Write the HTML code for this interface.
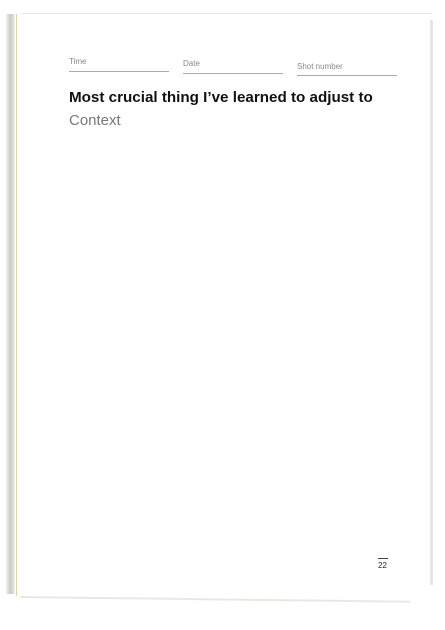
<!DOCTYPE html>
<html><head><style>
body{margin:0;width:445px;height:630px;background:#fff;position:relative;overflow:hidden;font-family:"Liberation Sans",sans-serif}
.a{position:absolute}
.lbl{font-size:8px;color:#888}
.ln{height:1px;background:#aaa}
</style></head><body>
<div class="a" style="left:6px;top:14px;width:9px;height:580px;background:linear-gradient(90deg,#f2f2ee,#c8cac4,#eeeee8)"></div>
<div class="a" style="left:16px;top:14px;width:1px;height:582px;background:#d8d4a8"></div>
<div class="a" style="left:22px;top:13px;width:410px;height:1px;background:#e4e4e0"></div>
<div class="a" style="left:430px;top:20px;width:3px;height:565px;background:#e6e6e2"></div>
<div class="a" style="left:20px;top:596px;width:390px;height:2px;background:#e8e8e2;transform:rotate(0.7deg);transform-origin:left"></div>
<div class="a lbl" style="left:69px;top:57px">Time</div>
<div class="a ln" style="left:69px;top:71px;width:100px"></div>
<div class="a lbl" style="left:183px;top:59px">Date</div>
<div class="a ln" style="left:183px;top:73px;width:100px"></div>
<div class="a lbl" style="left:297px;top:62px">Shot number</div>
<div class="a ln" style="left:297px;top:75px;width:100px"></div>
<div class="a" style="left:69px;top:89px;font-size:15.2px;font-weight:bold;color:#111">Most crucial thing I’ve learned to adjust to</div>
<div class="a" style="left:69px;top:112px;font-size:15px;color:#777">Context</div>
<div class="a" style="left:378px;top:558px;width:10px;height:1px;background:#444"></div>
<div class="a" style="left:378px;top:561px;font-size:8px;color:#222">22</div>
</body></html>
